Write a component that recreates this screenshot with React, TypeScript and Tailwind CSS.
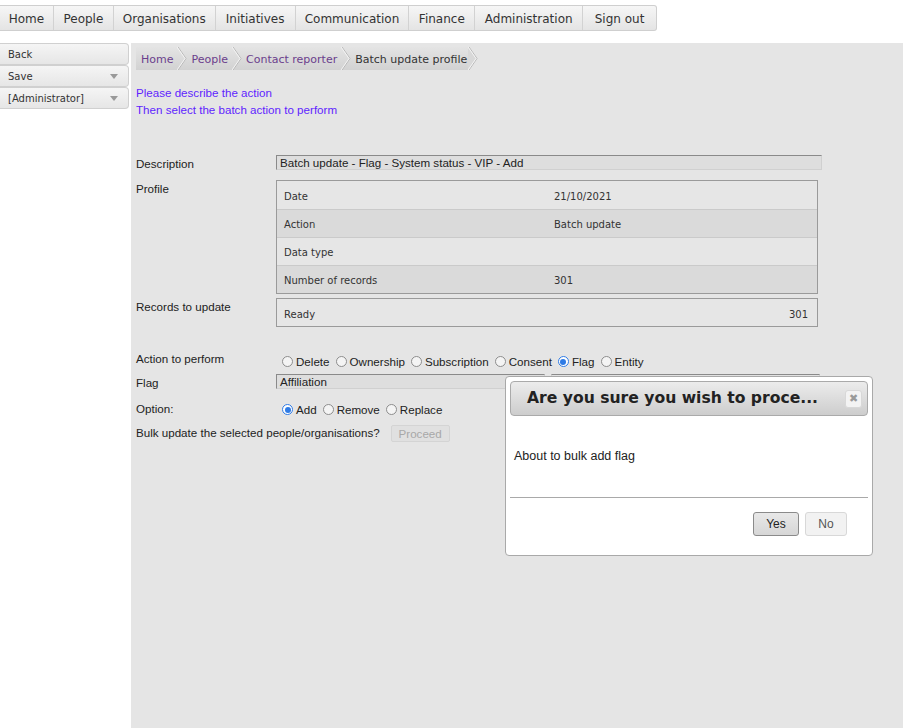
import React from "react";

const navItems = [
  { label: "Home", w: "w-[53px]" },
  { label: "People", w: "w-[60px]" },
  { label: "Organisations", w: "w-[102px]" },
  { label: "Initiatives", w: "w-[80px]" },
  { label: "Communication", w: "w-[114px]" },
  { label: "Finance", w: "w-[66px]" },
  { label: "Administration", w: "w-[108px]" },
  { label: "Sign out", w: "w-[74px]" },
];

const crumbs = ["Home", "People", "Contact reporter", "Batch update profile"];

function Radio({ checked, label }: { checked?: boolean; label: string }) {
  return (
    <span className="flex items-center">
      <span
        className={
          "ml-[6px] mr-[3px] flex h-[11px] w-[11px] items-center justify-center rounded-full border " +
          (checked ? "border-[#2f7be5] bg-white" : "border-[#8d8d8d] bg-[#f4f4f4]")
        }
      >
        {checked && <span className="h-[6px] w-[6px] rounded-full bg-[#2f7be5]" />}
      </span>
      <span>{label}</span>
    </span>
  );
}

function Chevron({ last }: { last?: boolean }) {
  return (
    <svg width="10" height="23" viewBox="0 0 10 23" className={last ? "" : "mx-[4px]"}>
      {last && <path d="M0 0 L9 11.5 L0 23 Z" fill="#d8d8d8" />}
      <path d="M1 0 L9 11.5 L1 23" fill="none" stroke="#b8b8b8" strokeWidth="1" />
      <path d="M0 0 L8 11.5 L0 23" fill="none" stroke="#f4f4f4" strokeWidth="1" />
    </svg>
  );
}

const profileRows = [
  { k: "Date", v: "21/10/2021", dark: false },
  { k: "Action", v: "Batch update", dark: true },
  { k: "Data type", v: "", dark: false },
  { k: "Number of records", v: "301", dark: true },
];

export default function App() {
  return (
    <div className="relative h-[728px] w-[903px] overflow-hidden bg-white font-['Liberation_Sans',Arial,sans-serif] text-[11.6px] text-[#222]">
      {/* Top navigation */}
      <div className="pt-[5px]">
        <div className="flex h-[26px] w-[657px] rounded-r-[3px] border border-l-0 border-[#cfcfcf] bg-gradient-to-b from-[#f6f6f6] to-[#e4e4e4] font-['DejaVu_Sans',Verdana,sans-serif] text-[12px] text-[#333]">
          {navItems.map((n, i) => (
            <div
              key={n.label}
              className={
                n.w +
                " flex items-center justify-center pt-[1px] " +
                (i > 0 ? "border-l border-[#d2d2d2]" : "")
              }
            >
              {n.label}
            </div>
          ))}
        </div>
      </div>

      <div className="mt-[12px] flex h-[685px]">
        {/* Sidebar */}
        <div className="flex w-[131px] flex-col bg-white font-['DejaVu_Sans',Verdana,sans-serif] text-[10px] text-[#333]">
          {[
            { t: "Back", arrow: false },
            { t: "Save", arrow: true },
            { t: "[Administrator]", arrow: true },
          ].map((b) => (
            <div
              key={b.t}
              className="flex h-[22px] w-[129px] items-center justify-between rounded-r-[4px] border border-l-0 border-[#d0d0d0] bg-gradient-to-b from-[#f5f5f5] to-[#e6e6e6] pl-[8px] pr-[10px]"
            >
              <span>{b.t}</span>
              {b.arrow && (
                <svg width="8" height="5" viewBox="0 0 8 5">
                  <path d="M0 0 H8 L4 5 Z" fill="#999" />
                </svg>
              )}
            </div>
          ))}
        </div>

        {/* Main */}
        <div className="flex-1 bg-[#e5e5e5] pl-[5px] pt-[4px]">
          {/* Breadcrumb */}
          <div className="flex h-[23px] w-fit items-center font-['DejaVu_Sans',Verdana,sans-serif] text-[11px]">
            <div className="flex h-[23px] items-center bg-gradient-to-b from-[#e4e4e4] to-[#d2d2d2] pl-[5px]">
              {crumbs.map((c, i) => (
                <React.Fragment key={c}>
                  <span className={"pt-[3px] " + (i === crumbs.length - 1 ? "text-[#333]" : "text-[#6b3f8c]")}>{c}</span>
                  {i < crumbs.length - 1 && <Chevron />}
                </React.Fragment>
              ))}
              <span className="w-[1px]" />
            </div>
            <Chevron last />
          </div>

          {/* Instructions */}
          <div className="mt-[14px] leading-[17px] text-[#5f1fff]">
            <div>Please describe the action</div>
            <div>Then select the batch action to perform</div>
          </div>

          {/* Description */}
          <div className="mt-[37px] flex items-start">
            <div className="w-[140px] pt-[1px] leading-[15px]">Description</div>
            <div className="flex h-[15px] w-[546px] items-center border border-[#d0d0d0] border-l-[#8a8a8a] border-t-[#8a8a8a] bg-[#dedede] pl-[3px] leading-[13px]">
              Batch update - Flag - System status - VIP - Add
            </div>
          </div>

          {/* Profile */}
          <div className="mt-[9px] flex items-start">
            <div className="w-[140px] pt-[1px] leading-[15px]">Profile</div>
            <div className="w-[542px] border border-[#9a9a9a] font-['DejaVu_Sans',Verdana,sans-serif] text-[10px] text-[#333]">
              {profileRows.map((r, i) => (
                <div
                  key={r.k}
                  className={
                    "flex h-[28px] items-center pt-[2px] " +
                    (r.dark ? "bg-[#dadada] " : "bg-[#e6e6e6] ") +
                    (i > 0 ? "border-t border-[#cacaca]" : "")
                  }
                >
                  <span className="w-[277px] pl-[7px]">{r.k}</span>
                  <span>{r.v}</span>
                </div>
              ))}
            </div>
          </div>

          {/* Records to update */}
          <div className="mt-[4px] flex items-start">
            <div className="w-[140px] pt-[1px] leading-[15px]">Records to update</div>
            <div className="flex h-[29px] w-[542px] items-center justify-between border border-[#9a9a9a] bg-[#e6e6e6] pl-[7px] pr-[9px] pt-[3px] font-['DejaVu_Sans',Verdana,sans-serif] text-[10px] text-[#333]">
              <span>Ready</span>
              <span>301</span>
            </div>
          </div>

          {/* Action to perform */}
          <div className="mt-[24px] flex h-[23px] items-start">
            <div className="w-[140px] leading-[15px]">Action to perform</div>
            <div className="flex pt-[3px] leading-[15px]">
              <Radio label="Delete" />
              <Radio label="Ownership" />
              <Radio label="Subscription" />
              <Radio label="Consent" />
              <Radio label="Flag" checked />
              <Radio label="Entity" />
            </div>
          </div>

          {/* Flag */}
          <div className="flex h-[26px] items-start">
            <div className="w-[140px] pt-[1px] leading-[15px]">Flag</div>
            <div className="flex h-[15px] w-[269px] items-center border border-[#d0d0d0] border-l-[#8a8a8a] border-t-[#8a8a8a] bg-[#dedede] pl-[3px] leading-[13px]">
              Affiliation
            </div>
            <div className="ml-[6px] h-[15px] w-[269px] border border-[#d0d0d0] border-t-[#8a8a8a] bg-[#e2e2e2]" />
          </div>

          {/* Option */}
          <div className="flex h-[24px] items-start">
            <div className="w-[140px] pt-[1px] leading-[15px]">Option:</div>
            <div className="flex pt-[2px] leading-[15px]">
              <Radio label="Add" checked />
              <Radio label="Remove" />
              <Radio label="Replace" />
            </div>
          </div>

          {/* Bulk update */}
          <div className="mt-[1px] flex items-start">
            <div className="leading-[15px]">Bulk update the selected people/organisations?</div>
            <div className="ml-[11px] flex h-[17px] w-[59px] items-center justify-center rounded-[2px] border border-[#d4d4d4] bg-[#e0e0e0] text-[#a8a8a8]">
              Proceed
            </div>
          </div>
        </div>
      </div>

      {/* Confirmation dialog */}
      <div className="absolute left-[505px] top-[376px] h-[180px] w-[368px] rounded-[4px] border border-[#a9a9a9] bg-white p-[4px]">
        <div className="flex h-[35px] items-center justify-between rounded-[4px] border border-[#aaaaaa] bg-gradient-to-b from-[#ececec] to-[#cdcdcd] pl-[16px] pr-[5px]">
          <span className="pt-[1px] font-['DejaVu_Sans',Verdana,sans-serif] text-[15.6px] font-bold text-[#222]">
            Are you sure you wish to proce...
          </span>
          <span className="flex h-[18px] w-[17px] items-center justify-center rounded-[3px] border border-[#d8d8d8] bg-[#f3f3f3] text-[11px] text-[#9a9a9a]">
            ✖
          </span>
        </div>
        <div className="h-[81px] pl-[4px] pt-[33px] text-[12.5px] leading-[15px] text-[#222]">About to bulk add flag</div>
        <div className="border-t border-[#a9a9a9]" />
        <div className="flex justify-end gap-[6px] pr-[21px] pt-[14px] text-[12px]">
          <div className="flex h-[24px] w-[46px] items-center justify-center rounded-[3px] border border-[#8a8a8a] bg-gradient-to-b from-[#e8e8e8] to-[#d6d6d6] text-[#222]">
            Yes
          </div>
          <div className="flex h-[24px] w-[42px] items-center justify-center rounded-[3px] border border-[#d8d8d8] bg-[#f2f2f2] text-[#555]">
            No
          </div>
        </div>
      </div>
    </div>
  );
}
